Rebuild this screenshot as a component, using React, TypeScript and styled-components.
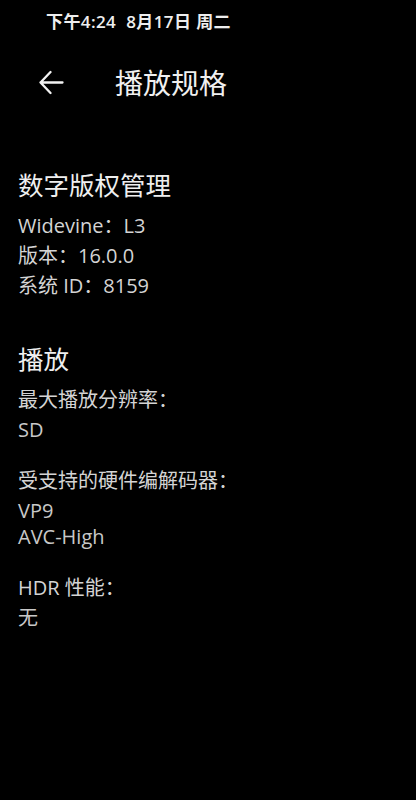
import React from 'react'
import styled, { createGlobalStyle } from 'styled-components'

const GlobalStyle = createGlobalStyle`
  html, body {
    margin: 0;
    padding: 0;
    background: #000;
  }
  body {
    font-family: "Open Sans", "Noto Sans CJK SC", sans-serif;
    color: #d6d6d6;
  }
`

type Entry = {
  label: string
  values: string[]
}

const drm: string[] = ['Widevine：L3', '版本：16.0.0', '系统 ID：8159']

const playback: Entry[] = [
  { label: '最大播放分辨率：', values: ['SD'] },
  { label: '受支持的硬件编解码器：', values: ['VP9', 'AVC-High'] },
  { label: 'HDR 性能：', values: ['无'] },
]

function BackArrow() {
  return (
    <svg width="25" height="25" viewBox="0 0 25 25" fill="none">
      <path
        d="M1.5 12.5H23.5M11.5 2L1.5 12.5L11.5 23"
        stroke="#f2f2f2"
        strokeWidth="2.3"
        strokeLinecap="round"
        strokeLinejoin="round"
      />
    </svg>
  )
}

function App() {
  return (
    <Screen>
      <GlobalStyle />
      <StatusBar>
        <span>下午4:24</span>
        <span>8月17日 周二</span>
      </StatusBar>
      <Toolbar>
        <BackButton>
          <BackArrow />
        </BackButton>
        <Title>播放规格</Title>
      </Toolbar>

      <Section>
        <SectionTitle>数字版权管理</SectionTitle>
        {drm.map((line) => (
          <Line key={line}>{line}</Line>
        ))}
      </Section>

      <Section>
        <SectionTitle>播放</SectionTitle>
        {playback.map((entry) => (
          <Group key={entry.label}>
            <Line>{entry.label}</Line>
            <ValueList>
              {entry.values.map((v) => (
                <Value key={v}>{v}</Value>
              ))}
            </ValueList>
          </Group>
        ))}
      </Section>
    </Screen>
  )
}

const Screen = styled.div`
  width: 416px;
  min-height: 800px;
  background: #000;
  display: flex;
  flex-direction: column;
`

const StatusBar = styled.div`
  height: 40px;
  padding-left: 46px;
  display: flex;
  align-items: center;
  gap: 10px;
  font-size: 17px;
  font-weight: 600;
  letter-spacing: 0.4px;
  color: #eeeeee;
`

const Toolbar = styled.div`
  height: 84px;
  display: flex;
  align-items: center;
`

const BackButton = styled.div`
  width: 115px;
  padding-left: 39px;
  box-sizing: border-box;
  display: flex;
  align-items: center;
`

const Title = styled.span`
  font-size: 28px;
  color: #f0f0f0;
`

const Section = styled.div`
  padding: 0 18px;
  display: flex;
  flex-direction: column;
  margin-top: 42px;

  & + & {
    margin-top: 39px;
  }
`

const SectionTitle = styled.div`
  font-size: 25.5px;
  line-height: 38px;
  color: #efefef;
  margin-bottom: 7px;
`

const Line = styled.div`
  font-size: 20px;
  line-height: 30px;
  color: #d4d4d4;
`

const Group = styled.div`
  display: flex;
  flex-direction: column;

  & + & {
    margin-top: 23px;
  }
`

const ValueList = styled.div`
  display: flex;
  flex-direction: column;
  padding-top: 2px;
`

const Value = styled.div`
  font-size: 20px;
  line-height: 26px;
  color: #c8c8c8;
`

export default App
